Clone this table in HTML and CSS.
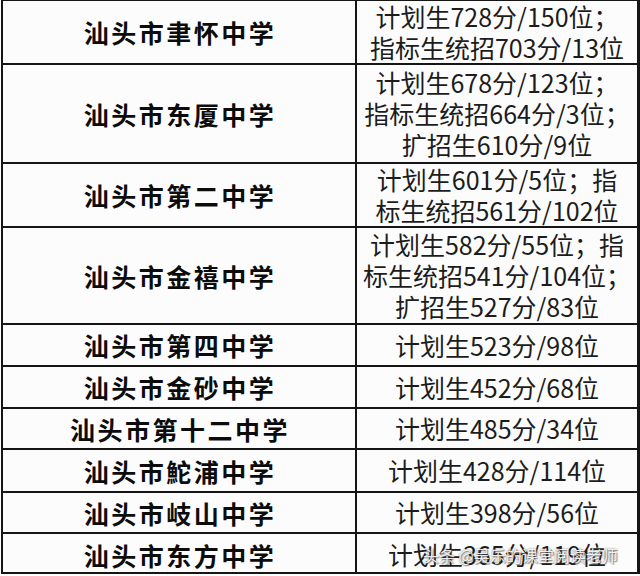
FILE: index.html
```html
<!DOCTYPE html>
<html lang="zh-CN">
<head>
<meta charset="utf-8">
<title>汕头市中学录取分数</title>
<link rel="stylesheet" href="styles.css">
</head>
<body>
<div class="sheet">
  <div class="name r1">汕头市聿怀中学</div>
  <div class="info r1"><span>计划生728分/150位；</span><span>指标生统招703分/13位</span></div>

  <div class="name r2">汕头市东厦中学</div>
  <div class="info r2"><span>计划生678分/123位；</span><span>指标生统招664分/3位；</span><span>扩招生610分/9位</span></div>

  <div class="name r3">汕头市第二中学</div>
  <div class="info r3"><span>计划生601分/5位；指</span><span>标生统招561分/102位</span></div>

  <div class="name r4">汕头市金禧中学</div>
  <div class="info r4"><span>计划生582分/55位；指</span><span>标生统招541分/104位；</span><span>扩招生527分/83位</span></div>

  <div class="name r5">汕头市第四中学</div>
  <div class="info r5"><span>计划生523分/98位</span></div>

  <div class="name r6">汕头市金砂中学</div>
  <div class="info r6"><span>计划生452分/68位</span></div>

  <div class="name r7">汕头市第十二中学</div>
  <div class="info r7"><span>计划生485分/34位</span></div>

  <div class="name r8">汕头市鮀浦中学</div>
  <div class="info r8"><span>计划生428分/114位</span></div>

  <div class="name r9">汕头市岐山中学</div>
  <div class="info r9"><span>计划生398分/56位</span></div>

  <div class="name r10">汕头市东方中学</div>
  <div class="info r10 last"><span>计划生365分/119位</span><span class="mark">头条 @吴乐的课堂阅读老师</span></div>
</div>
</body>
</html>
```

FILE: styles.css
```css
html, body {
  margin: 0;
  padding: 0;
  background: #ffffff;
}

body {
  width: 640px;
  height: 576px;
  overflow: hidden;
  font-family: "Noto Sans CJK SC", "Noto Sans", sans-serif;
  color: #111111;
}

.sheet {
  margin-left: 1px;
  width: 638px;
  display: grid;
  grid-template-columns: 352px 280px;
  grid-template-rows: 62px 97px 62px 95px 40px 40px 39px 41px 39px 38px;
  gap: 2px;
  padding: 1px 2px 2px 2px;
  background: #151515;
  box-sizing: content-box;
}

.sheet > div {
  background: #fdfcfd;
}

.name {
  display: flex;
  align-items: center;
  justify-content: center;
  font-weight: 700;
  font-size: 25px;
  letter-spacing: 2.5px;
  padding-left: 2px;
  color: #0c0c0c;
}

.info {
  display: flex;
  flex-direction: column;
  align-items: center;
  justify-content: center;
  font-size: 25px;
  font-weight: 400;
  line-height: 31px;
  letter-spacing: 0;
  color: #1c1c1c;
  white-space: nowrap;
}

.info span {
  display: block;
  height: 31px;
}

.r10 {
  padding-top: 3px;
  box-sizing: border-box;
}

.last {
  position: relative;
}

.info .mark {
  position: absolute;
  left: 66px;
  top: 10px;
  height: 22px;
  font-size: 16px;
  line-height: 22px;
  letter-spacing: 0;
  font-weight: 400;
  color: rgba(255, 255, 255, 0.88);
  text-shadow: 0 0 2px rgba(60, 60, 60, 0.75), 1px 1px 1px rgba(80, 80, 80, 0.6);
}
```
